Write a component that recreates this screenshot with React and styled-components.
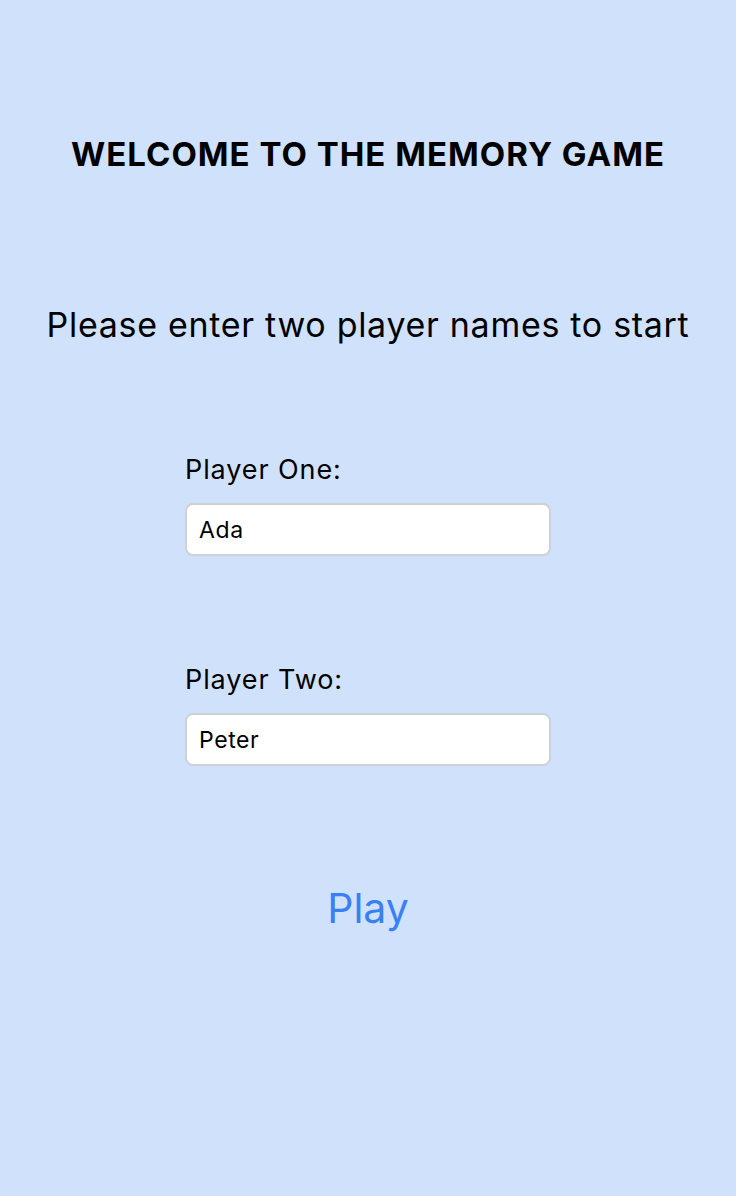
import React, { useState } from 'react'
import styled, { createGlobalStyle } from 'styled-components'

const bg = '#D0E2FB'
const blue = '#3A80F5'

const GlobalStyle = createGlobalStyle`
	html, body {
		margin: 0;
		padding: 0;
		background: ${bg};
		font-family: Inter, "Noto Sans", sans-serif;
	}
`

const Screen = styled.div`
	width: 736px;
	height: 1196px;
	background: ${bg};
	display: flex;
	flex-direction: column;
	align-items: center;
	box-sizing: border-box;
	padding-top: 134px;
`

const Title = styled.h1`
	margin: 0;
	font-size: 33px;
	letter-spacing: 1px;
	font-weight: 700;
	color: #000;
	line-height: 40px;
`

const Subtitle = styled.p`
	margin: 129px 0 0;
	font-size: 34px;
	letter-spacing: 0.7px;
	font-weight: 400;
	color: #000;
	line-height: 44px;
`

const Form = styled.div`
	width: 366px;
	margin-top: 107px;
	display: flex;
	flex-direction: column;
	gap: 108px;
`

const Field = styled.label`
	display: flex;
	flex-direction: column;
	gap: 17px;
`

const Label = styled.span`
	font-size: 27px;
	letter-spacing: 0.9px;
	line-height: 32px;
	color: #000;
`

const Input = styled.input`
	box-sizing: border-box;
	width: 366px;
	height: 53px;
	padding: 0 12px;
	border: 2px solid #cfd1d6;
	border-radius: 8px;
	background: #fff;
	font-family: Inter, "Noto Sans", sans-serif;
	font-size: 23px;
	letter-spacing: 0.6px;
	color: #000;
	outline: none;
`

const PlayButton = styled.button`
	margin-top: 117px;
	border: none;
	background: none;
	padding: 0;
	font-family: Inter, "Noto Sans", sans-serif;
	font-size: 41px;
	color: ${blue};
	cursor: pointer;
`

const App = () => {
	const [one, setOne] = useState('Ada')
	const [two, setTwo] = useState('Peter')

	return (
		<>
			<GlobalStyle />
			<Screen>
				<Title>WELCOME TO THE MEMORY GAME</Title>
				<Subtitle>Please enter two player names to start</Subtitle>
				<Form>
					<Field>
						<Label>Player One:</Label>
						<Input value={one} onChange={e => setOne(e.target.value)} />
					</Field>
					<Field>
						<Label>Player Two:</Label>
						<Input value={two} onChange={e => setTwo(e.target.value)} />
					</Field>
				</Form>
				<PlayButton>Play</PlayButton>
			</Screen>
		</>
	)
}

export default App
